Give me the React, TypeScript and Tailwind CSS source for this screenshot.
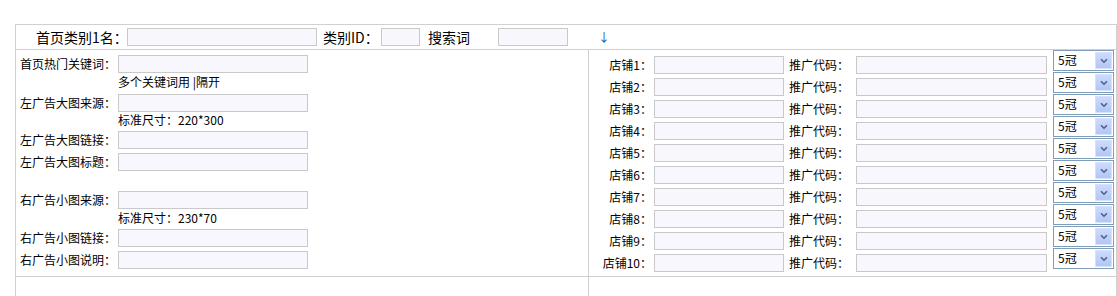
import React from 'react'

const shops = Array.from({ length: 10 }, (_, i) => i + 1)

function Field({ className = 'w-[190px]' }: { className?: string }) {
  return (
    <input
      type="text"
      className={`h-[18px] shrink-0 border border-[#c9c9c9] bg-[#f8f7fd] outline-none ${className}`}
    />
  )
}

function Crown() {
  return (
    <div className="-mt-[4px] ml-[6px] flex h-[21px] w-[61px] shrink-0 self-start border border-[#7f9db9] bg-white p-[1px]">
      <span className="flex-1 pl-[3px] text-[12px] leading-[15px]">5冠</span>
      <span className="flex h-[17px] w-[17px] items-center justify-center border border-[#d6e2fc] bg-gradient-to-b from-[#cddafd] to-[#b2c7f6]">
        <svg width="8" height="6" viewBox="0 0 8 6">
          <path d="M1 1.2 L4 4.2 L7 1.2" fill="none" stroke="#4d6185" strokeWidth="1.6" />
        </svg>
      </span>
    </div>
  )
}

function Row({ label }: { label: string }) {
  return (
    <div className="flex h-[18px] items-center whitespace-nowrap">
      <span className="w-[98px] shrink-0">{label}</span>
      <Field />
    </div>
  )
}

function Hint({ text, className }: { text: string; className: string }) {
  return <div className={`whitespace-nowrap pl-[98px] leading-[16px] ${className}`}>{text}</div>
}

export default function App() {
  return (
    <div className="bg-white pl-[15px] pt-[24px] font-['Noto_Sans_CJK_SC','Liberation_Sans',sans-serif] text-[12px] text-black">
      <div className="w-[1102px] border border-[#d0d0d0]">
        <div className="flex h-[25px] items-center whitespace-nowrap border-b border-[#d0d0d0] pl-[20px] text-[14px]">
          <span className="w-[91px] shrink-0">首页类别1名：</span>
          <Field className="w-[190px]" />
          <span className="ml-[6px] w-[58px] shrink-0">类别ID：</span>
          <Field className="w-[39px]" />
          <span className="ml-[8px] w-[70px] shrink-0">搜索词</span>
          <Field className="w-[70px]" />
          <span className="ml-[30px] text-[12px] text-[#1d4ea3]">↓</span>
        </div>

        <div className="grid grid-cols-[573px_1fr] border-b border-[#d0d0d0]">
          <div className="h-[226px] border-r border-[#d0d0d0] pl-[4px] pt-[5px]">
            <Row label="首页热门关键词：" />
            <Hint text="多个关键词用 |隔开" className="h-[21px] pt-[1px]" />
            <Row label="左广告大图来源：" />
            <Hint text="标准尺寸：220*300" className="h-[19px]" />
            <Row label="左广告大图链接：" />
            <div className="mt-[4px]">
              <Row label="左广告大图标题：" />
            </div>
            <div className="mt-[20px]">
              <Row label="右广告小图来源：" />
            </div>
            <Hint text="标准尺寸：230*70" className="h-[20px] pt-[1px]" />
            <Row label="右广告小图链接：" />
            <div className="mt-[4px]">
              <Row label="右广告小图说明：" />
            </div>
          </div>

          <div className="pt-[4px]">
            {shops.map((n) => (
              <div key={n} className="flex h-[22px] items-center whitespace-nowrap">
                <span className="w-[65px] shrink-0 pr-[2px] text-right">店铺{n}：</span>
                <Field className="w-[130px]" />
                <span className="ml-[5px] w-[67px] shrink-0">推广代码：</span>
                <Field className="w-[191px]" />
                <Crown />
              </div>
            ))}
          </div>
        </div>

        <div className="grid h-[25px] grid-cols-[573px_1fr]">
          <div className="border-r border-[#d0d0d0]" />
          <div />
        </div>
      </div>
    </div>
  )
}
